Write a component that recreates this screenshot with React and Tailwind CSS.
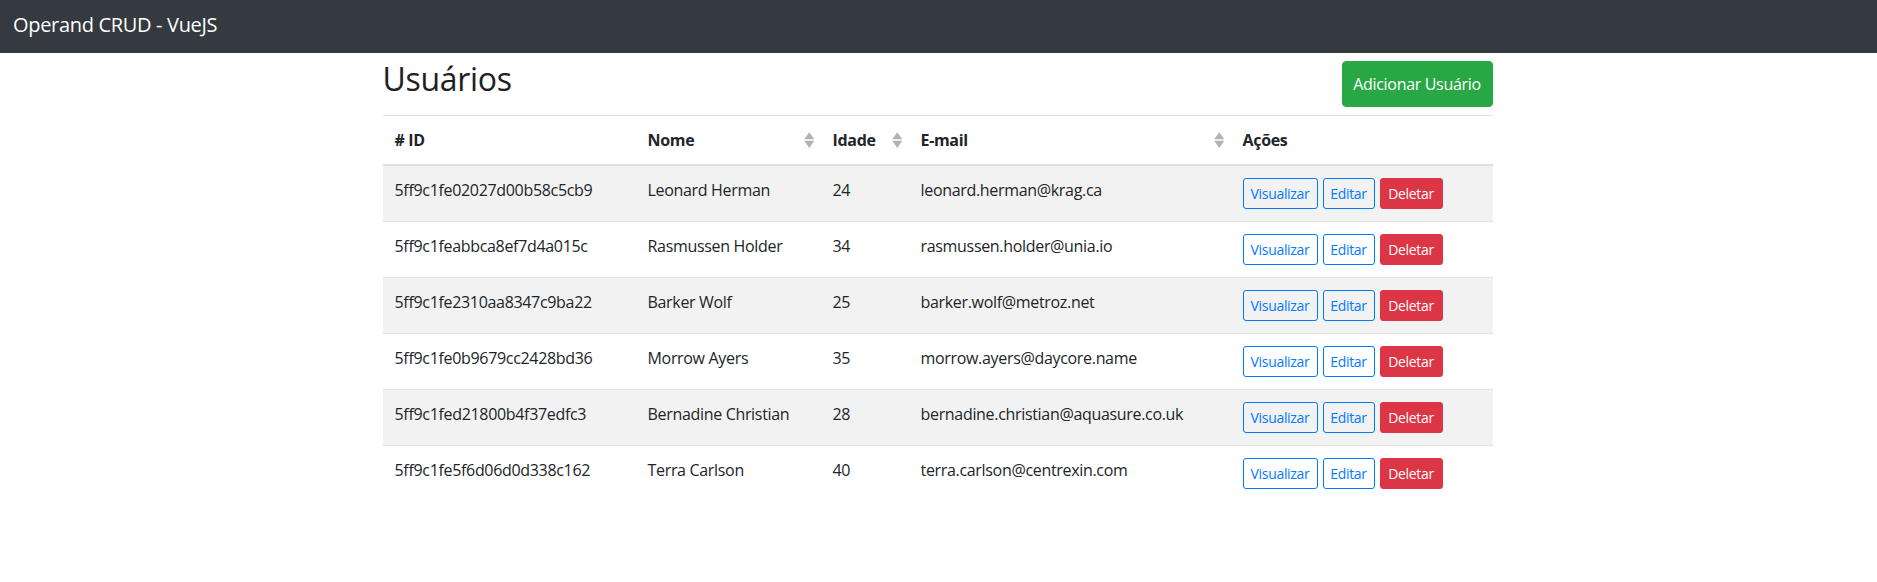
import React from "react";

const rows = [
  ["5ff9c1fe02027d00b58c5cb9", "Leonard Herman", "24", "leonard.herman@krag.ca"],
  ["5ff9c1feabbca8ef7d4a015c", "Rasmussen Holder", "34", "rasmussen.holder@unia.io"],
  ["5ff9c1fe2310aa8347c9ba22", "Barker Wolf", "25", "barker.wolf@metroz.net"],
  ["5ff9c1fe0b9679cc2428bd36", "Morrow Ayers", "35", "morrow.ayers@daycore.name"],
  ["5ff9c1fed21800b4f37edfc3", "Bernadine Christian", "28", "bernadine.christian@aquasure.co.uk"],
  ["5ff9c1fe5f6d06d0d338c162", "Terra Carlson", "40", "terra.carlson@centrexin.com"],
];

function SortIcon() {
  return (
    <svg
      viewBox="0 0 101 101"
      preserveAspectRatio="none"
      className="w-[10.4px] h-[16px] shrink-0"
    >
      <path
        fill="black"
        opacity=".3"
        d="M51 1l25 23 24 22H1l25-22zM51 101l25-23 24-22H1l25 22z"
      />
    </svg>
  );
}

function Th({ children, sortable, className = "" }) {
  return (
    <th
      className={
        "text-left align-bottom font-bold border-t border-b-2 border-[#dee2e6] pt-3 pb-3 pl-3 leading-6 " +
        (sortable ? "pr-[6px] " : "pr-3 ") +
        className
      }
    >
      {sortable ? (
        <div className="flex items-center justify-between">
          <span>{children}</span>
          <SortIcon />
        </div>
      ) : (
        children
      )}
    </th>
  );
}

export default function App() {
  return (
    <div className="min-h-[582px] bg-white text-[#212529] font-['Segoe_UI','Open_Sans',sans-serif] text-[16px] leading-6 tracking-[-0.02em]">
      <nav className="h-[53px] bg-[#343a40] pl-[13px] pt-[10px]">
        <span className="text-white text-[20px] leading-[30px]">Operand CRUD - VueJS</span>
      </nav>

      <div className="w-[1110px] mx-auto -translate-x-[1px]">
        <div className="flex items-start justify-between pt-[7px] h-[62px]">
          <h2 className="text-[32px] leading-[38px] font-medium text-[#1d2125]">Usuários</h2>
          <button className="mt-[1px] w-[151px] h-[46px] rounded-[4px] bg-[#28a745] border border-[#28a745] text-white text-[16px] leading-6 text-center">
            Adicionar Usuário
          </button>
        </div>

        <table className="w-full table-fixed border-collapse">
          <thead>
            <tr>
              <Th className="w-[253px]"># ID</Th>
              <Th className="w-[185px]" sortable>Nome</Th>
              <Th className="w-[88px]" sortable>Idade</Th>
              <Th className="w-[322px]" sortable>E-mail</Th>
              <Th className="w-[262px]">Ações</Th>
            </tr>
          </thead>
          <tbody>
            {rows.map((r, i) => (
              <tr key={r[0]} className={i % 2 === 0 ? "bg-[#f2f2f2]" : "bg-white"}>
                {r.map((c, j) => (
                  <td key={j} className="align-top p-3 border-t border-[#dee2e6] whitespace-nowrap">
                    {c}
                  </td>
                ))}
                <td className="align-top p-3 border-t border-[#dee2e6]">
                  <div className="flex gap-[5px]">
                    <button className="w-[75px] h-[31px] rounded-[3px] border border-[#007bff] text-[#007bff] text-[14px] leading-[21px] bg-transparent text-center">
                      Visualizar
                    </button>
                    <button className="w-[52px] h-[31px] rounded-[3px] border border-[#007bff] text-[#007bff] text-[14px] leading-[21px] bg-transparent text-center">
                      Editar
                    </button>
                    <button className="w-[63px] h-[31px] rounded-[3px] border border-[#dc3545] bg-[#dc3545] text-white text-[14px] leading-[21px] text-center">
                      Deletar
                    </button>
                  </div>
                </td>
              </tr>
            ))}
          </tbody>
        </table>
      </div>
    </div>
  );
}
